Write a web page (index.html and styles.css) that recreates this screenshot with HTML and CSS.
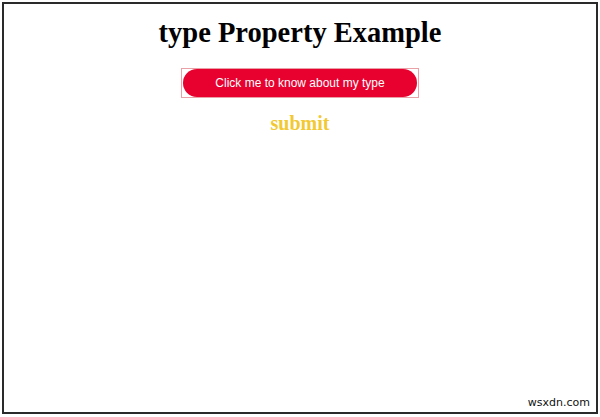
FILE: index.html
```html
<!DOCTYPE html>
<html>
<head>
<meta charset="utf-8">
<link rel="stylesheet" href="styles.css">
</head>
<body>
<div class="frame">
  <h1 class="title">type Property Example</h1>
  <div class="btn-wrap">
    <button class="btn">Click me to know about my type</button>
  </div>
  <p class="submit">submit</p>
  <span class="mark">wsxdn.com</span>
</div>
</body>
</html>
```
FILE: styles.css
```css
html, body {
  margin: 0;
  padding: 0;
  background: #ffffff;
}
.frame {
  position: relative;
  box-sizing: border-box;
  width: 596px;
  height: 412px;
  margin: 2px 0 0 2px;
  border: 2px solid #2a2a2a;
  display: flex;
  flex-direction: column;
  align-items: center;
  font-family: "Liberation Serif", serif;
}
.title {
  margin: 13px 0 0 0;
  font-size: 28.5px;
  font-weight: bold;
  color: #000;
  line-height: 32px;
}
.btn-wrap {
  margin-top: 19px;
  border: 1px solid #e9a0a6;
  padding: 0 1px;
}
.btn {
  display: block;
  width: 234px;
  height: 28px;
  border: none;
  border-radius: 14px;
  background: #e8002e;
  color: #ffffff;
  font-family: "Liberation Sans", Arial, sans-serif;
  font-size: 12px;
  padding: 0;
}
.submit {
  margin: 13px 0 0 0;
  font-size: 20px;
  font-weight: bold;
  color: #f2c933;
  line-height: 24px;
}
.mark {
  position: absolute;
  right: 6px;
  bottom: 3px;
  font-family: "DejaVu Sans", sans-serif;
  font-size: 11px;
  color: #111;
}
```
